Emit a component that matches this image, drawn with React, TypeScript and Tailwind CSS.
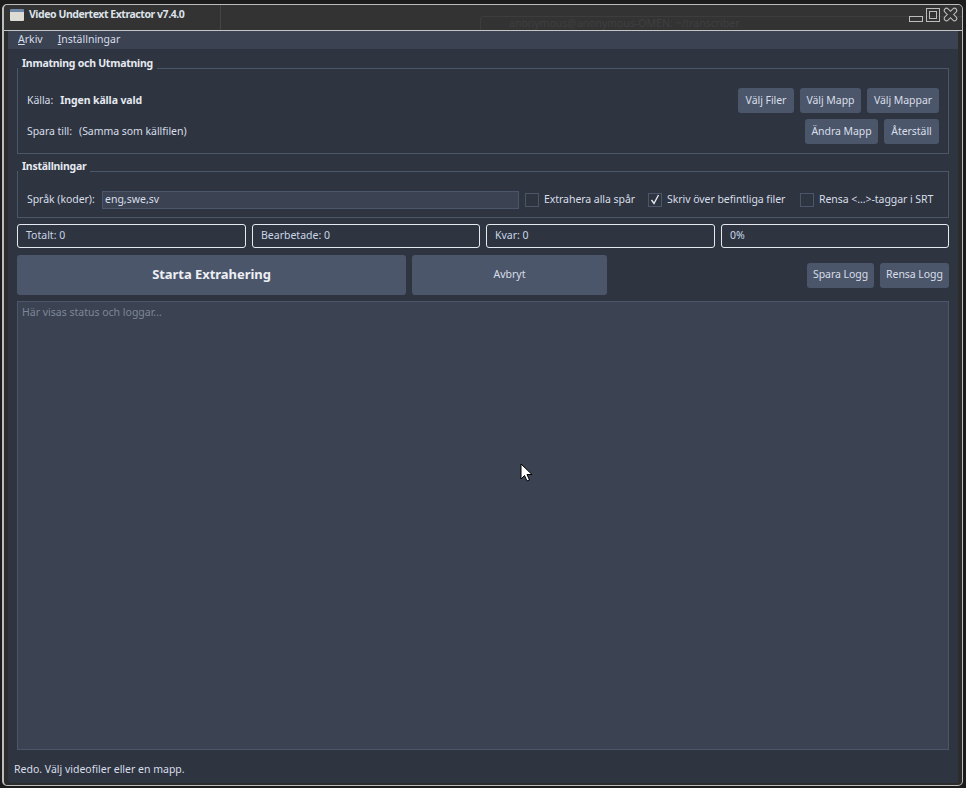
const font = { fontFamily: '"Noto Sans", "Open Sans", sans-serif' };

function Btn({ label, className }: { label: string; className: string }) {
  return (
    <button className={"h-[25px] shrink-0 rounded-[3px] bg-[#4c566a] text-[10.5px] tracking-[-0.05px] text-[#d8dee9] " + className}>
      {label}
    </button>
  );
}

function Check({ label, checked, className }: { label: string; checked?: boolean; className: string }) {
  return (
    <div className={"flex items-center shrink-0 " + className}>
      <div className="w-[14px] h-[14px] border border-[#4c566a] bg-[#2e3440] flex items-center justify-center">
        {checked && (
          <svg width="10" height="11" viewBox="0 0 10 11" fill="none">
            <path d="M1.5 6 L4 9.5 L8.5 1" stroke="#e5e9f0" strokeWidth="1.4" />
          </svg>
        )}
      </div>
      <span className="ml-[5px] text-[10.5px] tracking-[-0.05px] text-[#d8dee9] whitespace-nowrap">{label}</span>
    </div>
  );
}

function Stat({ label, className }: { label: string; className: string }) {
  return (
    <div className={"h-[24px] rounded-[3px] border border-[#e5e9f0] pl-[8px] flex items-center text-[10.5px] text-[#c9d6e8] " + className}>
      {label}
    </div>
  );
}

export default function App() {
  return (
    <div className="w-[966px] h-[788px] bg-[#1c1c1c] overflow-hidden pt-[4px] pl-[2px]" style={font}>
      <div className="w-[961px] h-[782px] border border-l-2 border-[#bcbcbc] bg-[#2c2c2c] rounded-[5px] flex flex-col">
        {/* title bar */}
        <div className="relative h-[26px] shrink-0 bg-[#333333] border-b border-[#c4c4c4] flex items-center pl-[6px] pr-[4px] pb-[6px] rounded-t-[5px] overflow-hidden">
          {/* window behind, showing through the translucent title bar */}
          <div className="absolute left-[216px] top-0 h-full border-l border-[#454545]" />
          <div className="absolute left-[476px] right-0 top-[11px] h-[14px] border-t border-l border-[#3d3d3d] rounded-tl-[4px]">
            <span className="absolute left-[28px] top-0 text-[10.5px] leading-[12px] text-[#3f3f3f] whitespace-nowrap">
              anonymous@anonymous-OMEN: ~/transcriber
            </span>
          </div>
          <div className="relative w-[14px] h-[12px] bg-[#dcdcd4] border-t-[3px] border-[#6f87a8] rounded-[1px]" />
          <span className="relative ml-[5px] text-[10.5px] font-bold tracking-[-0.45px] text-[#dde2ea]">Video Undertext Extractor v7.4.0</span>
          <div className="relative ml-auto flex items-center gap-[3px]">
            <svg width="14" height="14" viewBox="0 0 14 14" fill="none">
              <rect x="0.5" y="8.5" width="13" height="5" stroke="#bdbdbd" />
            </svg>
            <svg width="14" height="14" viewBox="0 0 14 14" fill="none">
              <rect x="0.5" y="0.5" width="13" height="13" stroke="#bdbdbd" />
              <rect x="3.5" y="3.5" width="7" height="7" stroke="#bdbdbd" />
            </svg>
            <svg width="15" height="15" viewBox="0 0 15 15" fill="none">
              <path d="M3.5 3.5 L11.5 11.5 M11.5 3.5 L3.5 11.5" stroke="#bdbdbd" strokeWidth="5.5" strokeLinecap="round" />
              <path d="M3.5 3.5 L11.5 11.5 M11.5 3.5 L3.5 11.5" stroke="#333333" strokeWidth="3.5" strokeLinecap="round" />
            </svg>
          </div>
        </div>

        {/* app area */}
        <div className="flex-1 ml-[4px] mr-[4px] mb-[2px] bg-[#2e3440] flex flex-col relative min-h-0 rounded-bl-[4px]">
          <div className="h-[18px] shrink-0 bg-[#3b4252] flex items-center pl-[10px] gap-[15px] text-[10.5px] text-[#d8dee9]">
            <span><u>A</u>rkiv</span>
            <span><u>I</u>nställningar</span>
          </div>

          <div className="px-[9px] pt-[19px] flex flex-col">
            {/* input / output */}
            <div className="relative h-[86px] border border-[#4c566a] pt-[19px] pl-[9px] pr-[9px] flex flex-col gap-[6px]">
              <span className="absolute left-[0px] top-[-14px] bg-[#2e3440] pl-[4px] pr-[4px] text-[10.5px] font-bold tracking-[-0.25px] text-[#e5e9f0] leading-[16px]">
                Inmatning och Utmatning
              </span>
              <div className="flex items-center text-[10.5px] tracking-[-0.05px] text-[#d8dee9]">
                <span className="pt-[1px]">Källa:</span>
                <span className="ml-[7px] pt-[1px] font-bold tracking-[-0.1px] text-[#e5e9f0]">Ingen källa vald</span>
                <div className="ml-auto flex gap-[6px]">
                  <Btn label="Välj Filer" className="w-[56px]" />
                  <Btn label="Välj Mapp" className="w-[61px]" />
                  <Btn label="Välj Mappar" className="w-[72px]" />
                </div>
              </div>
              <div className="flex items-center text-[10.5px] tracking-[-0.05px] text-[#d8dee9]">
                <span className="pt-[1px]">Spara till:</span>
                <span className="ml-[7px] pt-[1px]">(Samma som källfilen)</span>
                <div className="ml-auto flex gap-[6px]">
                  <Btn label="Ändra Mapp" className="w-[73px]" />
                  <Btn label="Återställ" className="w-[55px]" />
                </div>
              </div>
            </div>

            {/* settings */}
            <div className="relative mt-[17px] h-[47px] border border-[#4c566a] pl-[9px] pt-[10px] flex items-center">
              <span className="absolute left-[0px] top-[-14px] bg-[#2e3440] pl-[4px] pr-[4px] text-[10.5px] font-bold tracking-[-0.25px] text-[#e5e9f0] leading-[16px]">
                Inställningar
              </span>
              <span className="text-[10.5px] tracking-[-0.05px] text-[#d8dee9] whitespace-nowrap w-[75px] shrink-0">Språk (koder):</span>
              <div className="w-[417px] h-[18px] shrink-0 bg-[#3b4252] border border-[#4c566a] pl-[2px] flex items-center text-[10.5px] text-[#d8dee9]">
                eng,swe,sv
              </div>
              <Check label="Extrahera alla spår" className="ml-[6px] w-[123px]" />
              <Check label="Skriv över befintliga filer" checked className="w-[152px]" />
              <Check label="Rensa <...>-taggar i SRT" className="" />
            </div>

            {/* counters */}
            <div className="mt-[6px] flex gap-[6px]">
              <Stat label="Totalt: 0" className="w-[229px]" />
              <Stat label="Bearbetade: 0" className="w-[228px]" />
              <Stat label="Kvar: 0" className="w-[229px]" />
              <Stat label="0%" className="w-[228px]" />
            </div>

            {/* actions */}
            <div className="mt-[7px] flex items-center gap-[6px]">
              <button className="w-[389px] h-[40px] rounded-[3px] bg-[#4c566a] text-[13px] font-bold tracking-[-0.05px] text-[#eceff4]">
                Starta Extrahering
              </button>
              <button className="w-[195px] h-[40px] rounded-[3px] bg-[#4c566a] text-[10.5px] text-[#d8dee9]">
                Avbryt
              </button>
              <Btn label="Spara Logg" className="ml-auto w-[67px]" />
              <Btn label="Rensa Logg" className="w-[69px]" />
            </div>

            {/* log */}
            <div className="mt-[6px] h-[449px] bg-[#3b4252] border border-[#4c566a] pl-[4px] pt-[3px] text-[10.5px] text-[#7d8797]">
              Här visas status och loggar...
            </div>
          </div>

          <div className="pl-[6px] mt-[12px] text-[10.5px] text-[#d8dee9]">Redo. Välj videofiler eller en mapp.</div>

          {/* cursor */}
          <svg width="14" height="20" viewBox="0 0 14 20" className="absolute left-[512px] top-[432px]">
            <path d="M1 1 L1 16 L4.5 12.5 L7 18 L9.5 17 L7 11.5 L12 11.5 Z" fill="#ffffff" stroke="#000000" strokeWidth="1" />
          </svg>
        </div>
      </div>
    </div>
  );
}
